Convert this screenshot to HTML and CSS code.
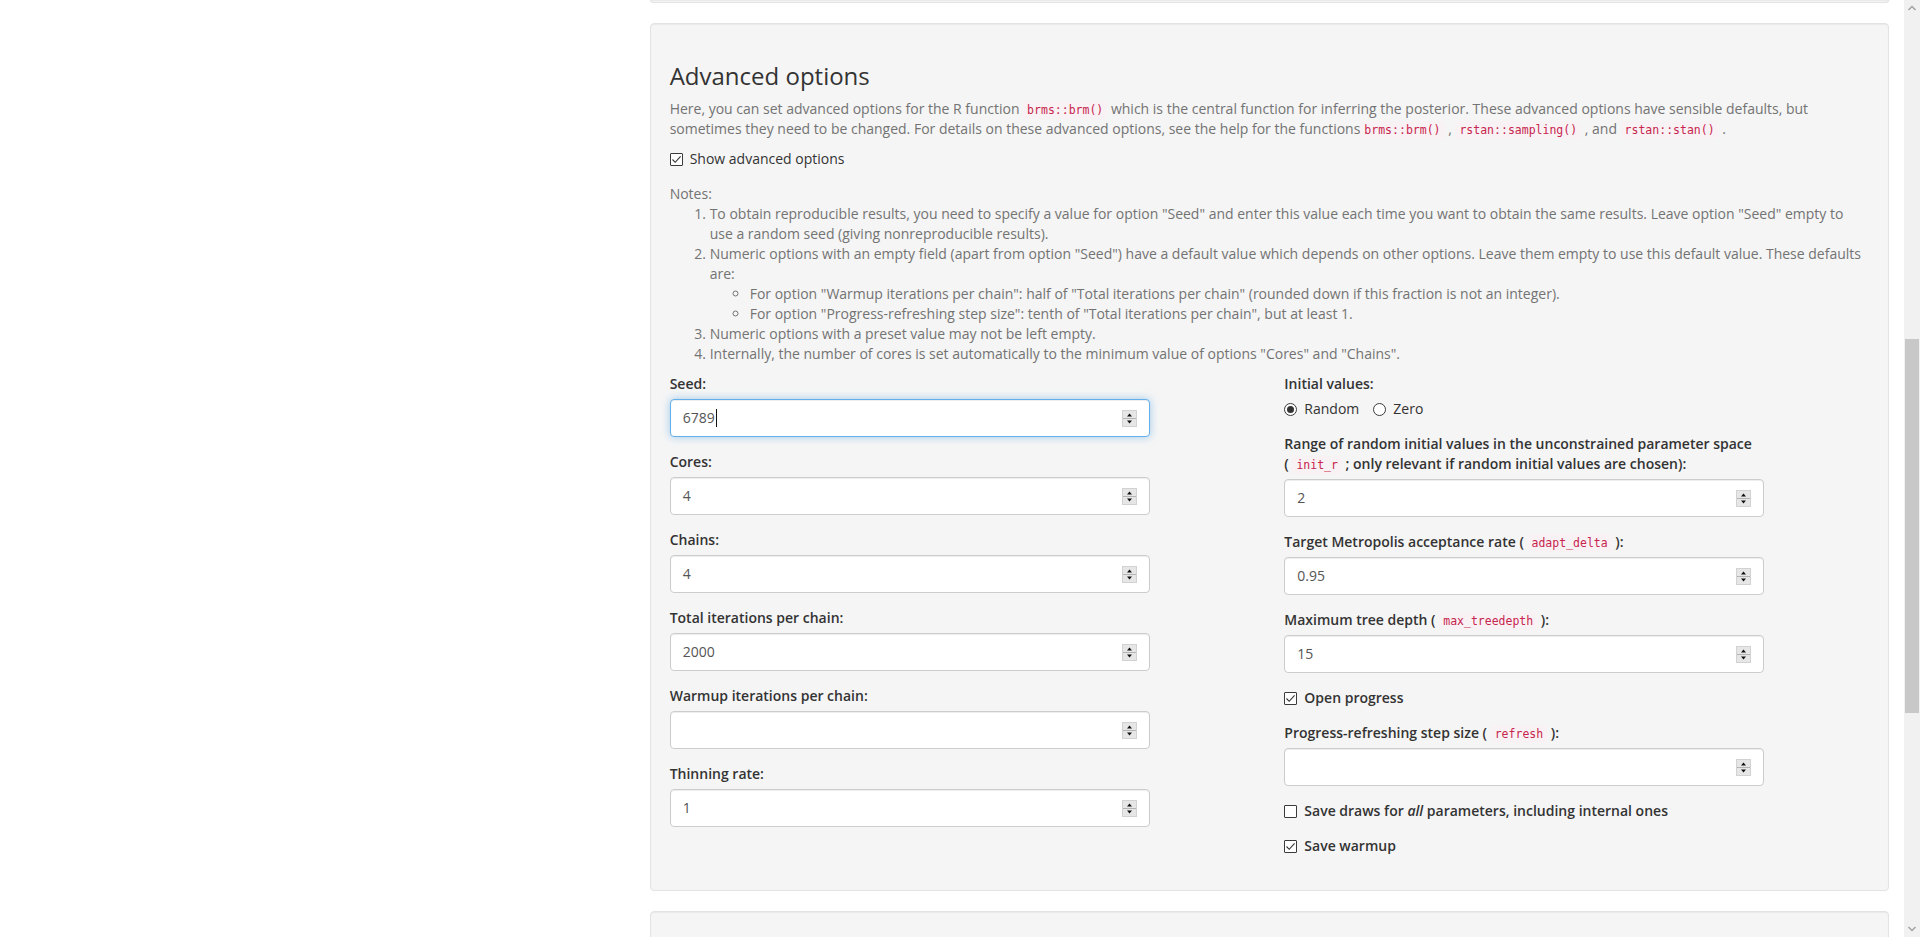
FILE: index.html
```html
<!DOCTYPE html>
<html lang="en">
<head>
<meta charset="utf-8">
<title>Advanced options</title>
<link rel="stylesheet" href="styles.css">
</head>
<body>
<div class="layout">
  <div class="sidebar"></div>
  <div class="main">
    <div class="well well-prev"></div>
    <div class="well">
      <h3 class="title">Advanced options</h3>
      <p class="help">Here, you can set advanced options for the R function <code>brms::brm()</code> which is the central function for inferring the posterior. These advanced options have sensible defaults, but sometimes they need to be changed. For details on these advanced options, see the help for the functions<code>brms::brm()</code> , <code>rstan::sampling()</code> , and <code>rstan::stan()</code> .</p>
      <div class="form-group">
        <div class="checkbox"><label><span class="cb checked"></span><span>Show advanced options</span></label></div>
      </div>
      <div class="notes">
        Notes:
        <ol>
          <li>To obtain reproducible results, you need to specify a value for option "Seed" and enter this value each time you want to obtain the same results. Leave option "Seed" empty to use a random seed (giving nonreproducible results).</li>
          <li>Numeric options with an empty field (apart from option "Seed") have a default value which depends on other options. Leave them empty to use this default value. These defaults are:
            <ul>
              <li>For option "Warmup iterations per chain": half of "Total iterations per chain" (rounded down if this fraction is not an integer).</li>
              <li>For option "Progress-refreshing step size": tenth of "Total iterations per chain", but at least 1.</li>
            </ul>
          </li>
          <li>Numeric options with a preset value may not be left empty.</li>
          <li>Internally, the number of cores is set automatically to the minimum value of options "Cores" and "Chains".</li>
        </ol>
      </div>
      <div class="row">
        <div class="col">
          <div class="form-group">
            <label class="control-label">Seed:</label>
            <div class="num focused"><span class="val">6789</span><span class="caret"></span><span class="fill"></span><svg class="spin" width="15" height="17" viewBox="0 0 15 17"><rect x="0.5" y="0.5" width="14" height="16" fill="#e6e6e6" stroke="#d2d2d2"/><line x1="1" y1="8.5" x2="14" y2="8.5" stroke="#b4b4b4"/><path d="M5 6.5h5L7.5 3.5z" fill="#111"/><path d="M5 10.5h5L7.5 13.5z" fill="#111"/></svg></div>
          </div>
          <div class="form-group">
            <label class="control-label">Cores:</label>
            <div class="num"><span class="val">4</span><span class="fill"></span><svg class="spin" width="15" height="17" viewBox="0 0 15 17"><rect x="0.5" y="0.5" width="14" height="16" fill="#e6e6e6" stroke="#d2d2d2"/><line x1="1" y1="8.5" x2="14" y2="8.5" stroke="#b4b4b4"/><path d="M5 6.5h5L7.5 3.5z" fill="#111"/><path d="M5 10.5h5L7.5 13.5z" fill="#111"/></svg></div>
          </div>
          <div class="form-group">
            <label class="control-label">Chains:</label>
            <div class="num"><span class="val">4</span><span class="fill"></span><svg class="spin" width="15" height="17" viewBox="0 0 15 17"><rect x="0.5" y="0.5" width="14" height="16" fill="#e6e6e6" stroke="#d2d2d2"/><line x1="1" y1="8.5" x2="14" y2="8.5" stroke="#b4b4b4"/><path d="M5 6.5h5L7.5 3.5z" fill="#111"/><path d="M5 10.5h5L7.5 13.5z" fill="#111"/></svg></div>
          </div>
          <div class="form-group">
            <label class="control-label">Total iterations per chain:</label>
            <div class="num"><span class="val">2000</span><span class="fill"></span><svg class="spin" width="15" height="17" viewBox="0 0 15 17"><rect x="0.5" y="0.5" width="14" height="16" fill="#e6e6e6" stroke="#d2d2d2"/><line x1="1" y1="8.5" x2="14" y2="8.5" stroke="#b4b4b4"/><path d="M5 6.5h5L7.5 3.5z" fill="#111"/><path d="M5 10.5h5L7.5 13.5z" fill="#111"/></svg></div>
          </div>
          <div class="form-group">
            <label class="control-label">Warmup iterations per chain:</label>
            <div class="num"><span class="val"></span><span class="fill"></span><svg class="spin" width="15" height="17" viewBox="0 0 15 17"><rect x="0.5" y="0.5" width="14" height="16" fill="#e6e6e6" stroke="#d2d2d2"/><line x1="1" y1="8.5" x2="14" y2="8.5" stroke="#b4b4b4"/><path d="M5 6.5h5L7.5 3.5z" fill="#111"/><path d="M5 10.5h5L7.5 13.5z" fill="#111"/></svg></div>
          </div>
          <div class="form-group">
            <label class="control-label">Thinning rate:</label>
            <div class="num"><span class="val">1</span><span class="fill"></span><svg class="spin" width="15" height="17" viewBox="0 0 15 17"><rect x="0.5" y="0.5" width="14" height="16" fill="#e6e6e6" stroke="#d2d2d2"/><line x1="1" y1="8.5" x2="14" y2="8.5" stroke="#b4b4b4"/><path d="M5 6.5h5L7.5 3.5z" fill="#111"/><path d="M5 10.5h5L7.5 13.5z" fill="#111"/></svg></div>
          </div>
        </div>
        <div class="col">
          <div class="form-group">
            <label class="control-label">Initial values:</label>
            <div class="radios">
              <label class="radio-inline"><span class="rb checked"></span><span>Random</span></label>
              <label class="radio-inline"><span class="rb"></span><span>Zero</span></label>
            </div>
          </div>
          <div class="form-group">
            <label class="control-label">Range of random initial values in the unconstrained parameter space<br>( <code>init_r</code> ; only relevant if random initial values are chosen):</label>
            <div class="num"><span class="val">2</span><span class="fill"></span><svg class="spin" width="15" height="17" viewBox="0 0 15 17"><rect x="0.5" y="0.5" width="14" height="16" fill="#e6e6e6" stroke="#d2d2d2"/><line x1="1" y1="8.5" x2="14" y2="8.5" stroke="#b4b4b4"/><path d="M5 6.5h5L7.5 3.5z" fill="#111"/><path d="M5 10.5h5L7.5 13.5z" fill="#111"/></svg></div>
          </div>
          <div class="form-group">
            <label class="control-label">Target Metropolis acceptance rate ( <code>adapt_delta</code> ):</label>
            <div class="num"><span class="val">0.95</span><span class="fill"></span><svg class="spin" width="15" height="17" viewBox="0 0 15 17"><rect x="0.5" y="0.5" width="14" height="16" fill="#e6e6e6" stroke="#d2d2d2"/><line x1="1" y1="8.5" x2="14" y2="8.5" stroke="#b4b4b4"/><path d="M5 6.5h5L7.5 3.5z" fill="#111"/><path d="M5 10.5h5L7.5 13.5z" fill="#111"/></svg></div>
          </div>
          <div class="form-group">
            <label class="control-label">Maximum tree depth ( <code>max_treedepth</code> ):</label>
            <div class="num"><span class="val">15</span><span class="fill"></span><svg class="spin" width="15" height="17" viewBox="0 0 15 17"><rect x="0.5" y="0.5" width="14" height="16" fill="#e6e6e6" stroke="#d2d2d2"/><line x1="1" y1="8.5" x2="14" y2="8.5" stroke="#b4b4b4"/><path d="M5 6.5h5L7.5 3.5z" fill="#111"/><path d="M5 10.5h5L7.5 13.5z" fill="#111"/></svg></div>
          </div>
          <div class="form-group">
            <div class="checkbox"><label class="bold"><span class="cb checked"></span><span>Open progress</span></label></div>
          </div>
          <div class="form-group">
            <label class="control-label">Progress-refreshing step size ( <code>refresh</code> ):</label>
            <div class="num"><span class="val"></span><span class="fill"></span><svg class="spin" width="15" height="17" viewBox="0 0 15 17"><rect x="0.5" y="0.5" width="14" height="16" fill="#e6e6e6" stroke="#d2d2d2"/><line x1="1" y1="8.5" x2="14" y2="8.5" stroke="#b4b4b4"/><path d="M5 6.5h5L7.5 3.5z" fill="#111"/><path d="M5 10.5h5L7.5 13.5z" fill="#111"/></svg></div>
          </div>
          <div class="form-group">
            <div class="checkbox"><label class="bold"><span class="cb"></span><span>Save draws for <em>all</em> parameters, including internal ones</span></label></div>
          </div>
          <div class="form-group">
            <div class="checkbox"><label class="bold"><span class="cb checked"></span><span>Save warmup</span></label></div>
          </div>
        </div>
      </div>
    </div>
    <div class="well well-next"></div>
  </div>
</div>
<div class="scrollbar">
  <div class="sb-btn"><svg width="16" height="17" viewBox="0 0 16 17"><path d="M4.5 10L8 6.5 11.5 10" fill="none" stroke="#a3a3a3" stroke-width="1.5"/></svg></div>
  <div class="sb-track"><div class="sb-thumb"></div></div>
  <div class="sb-btn"><svg width="16" height="17" viewBox="0 0 16 17"><path d="M4.5 7L8 10.5 11.5 7" fill="none" stroke="#a3a3a3" stroke-width="1.5"/></svg></div>
</div>
</body>
</html>
```

FILE: styles.css
```css
* { box-sizing: border-box; }
html, body { margin: 0; padding: 0; }
body {
  width: 1920px;
  height: 937px;
  overflow: hidden;
  display: flex;
  background: #fff;
  font-family: "Open Sans", "Noto Sans", sans-serif;
  font-size: 14px;
  line-height: 20px;
  color: #333;
}
.layout {
  flex: 1;
  display: grid;
  grid-template-columns: 1fr 2fr;
  height: 937px;
  overflow: hidden;
}
.sidebar, .main { padding: 0 15px; }
.well {
  background: #f5f5f5;
  border: 1px solid #e3e3e3;
  border-radius: 4px;
  box-shadow: inset 0 1px 1px rgba(0,0,0,.05);
  padding: 19px;
  margin-bottom: 20px;
}
.well-prev {
  height: 3px;
  padding: 0;
  border-top: none;
  border-top-left-radius: 0;
  border-top-right-radius: 0;
}
.well-next { height: 120px; }
.title {
  margin: 20px 0 10px;
  font-size: 24px;
  font-weight: 400;
  line-height: 26px;
  color: #333;
}
.help { margin: 0 0 10px; color: #737373; }
code {
  font-family: "DejaVu Sans Mono", "Liberation Mono", monospace;
  font-size: 11.5px;
  line-height: 1;
  font-weight: 400;
  padding: 2px 4px;
  color: #c7254e;
  background: #f9f2f4;
  border-radius: 4px;
}
.form-group { margin-bottom: 15px; }
.checkbox { margin: 10px 0; }
.checkbox label {
  display: flex;
  align-items: flex-start;
  min-height: 20px;
  font-weight: 400;
  cursor: pointer;
}
.checkbox label.bold { font-weight: 600; }
.cb {
  width: 13px;
  height: 13px;
  margin: 4px 7px 0 0;
  flex: none;
  border: 1px solid #3b3b3b;
  border-radius: 1px;
  background: #fff;
}
.cb.checked {
  background: #fff url("data:image/svg+xml;utf8,<svg xmlns='http://www.w3.org/2000/svg' width='11' height='11' viewBox='0 0 11 11'><path d='M1.5 5.5l2.7 2.8L9.6 2.3' fill='none' stroke='%23333' stroke-width='1.1'/></svg>") no-repeat center;
}
.notes { color: #737373; }
.notes ol { margin: 0 0 10px; padding-left: 40px; }
.notes ul { margin: 0; padding-left: 40px; list-style: circle; }
.row {
  display: grid;
  grid-template-columns: 1fr 1fr;
  column-gap: 30px;
}
.control-label {
  display: inline-block;
  max-width: 100%;
  margin-bottom: 5px;
  font-weight: 600;
}
.num {
  width: 480px;
  height: 38px;
  display: flex;
  align-items: center;
  padding: 0 12px;
  background: #fff;
  border: 1px solid #ccc;
  border-radius: 4px;
  box-shadow: inset 0 1px 1px rgba(0,0,0,.075);
  color: #555;
}
.num.focused {
  border-color: #66afe9;
  box-shadow: inset 0 1px 1px rgba(0,0,0,.075), 0 0 8px rgba(102,175,233,.6);
}
.caret {
  width: 1px;
  height: 18px;
  background: #111;
  margin-left: 1px;
}
.fill { flex: 1; }
.spin { flex: none; display: block; }
.radios {
  display: flex;
  height: 20px;
}
.radio-inline {
  display: flex;
  align-items: flex-start;
  height: 20px;
  font-weight: 400;
  cursor: pointer;
}
.radio-inline + .radio-inline { margin-left: 14px; }
.rb {
  width: 13px;
  height: 13px;
  margin: 4px 7px 0 0;
  flex: none;
  border: 1px solid #3b3b3b;
  border-radius: 50%;
  background: #fff;
  display: flex;
  align-items: center;
  justify-content: center;
}
.rb.checked::after {
  content: "";
  width: 7px;
  height: 7px;
  border-radius: 50%;
  background: #333;
}
.scrollbar {
  width: 16px;
  height: 937px;
  flex: none;
  display: flex;
  flex-direction: column;
  background: #f1f1f1;
}
.sb-btn { height: 17px; flex: none; }
.sb-btn svg { display: block; }
.sb-track { flex: 1; padding: 322px 1px 0; }
.sb-thumb { height: 374px; background: #c8c8c8; }
```
